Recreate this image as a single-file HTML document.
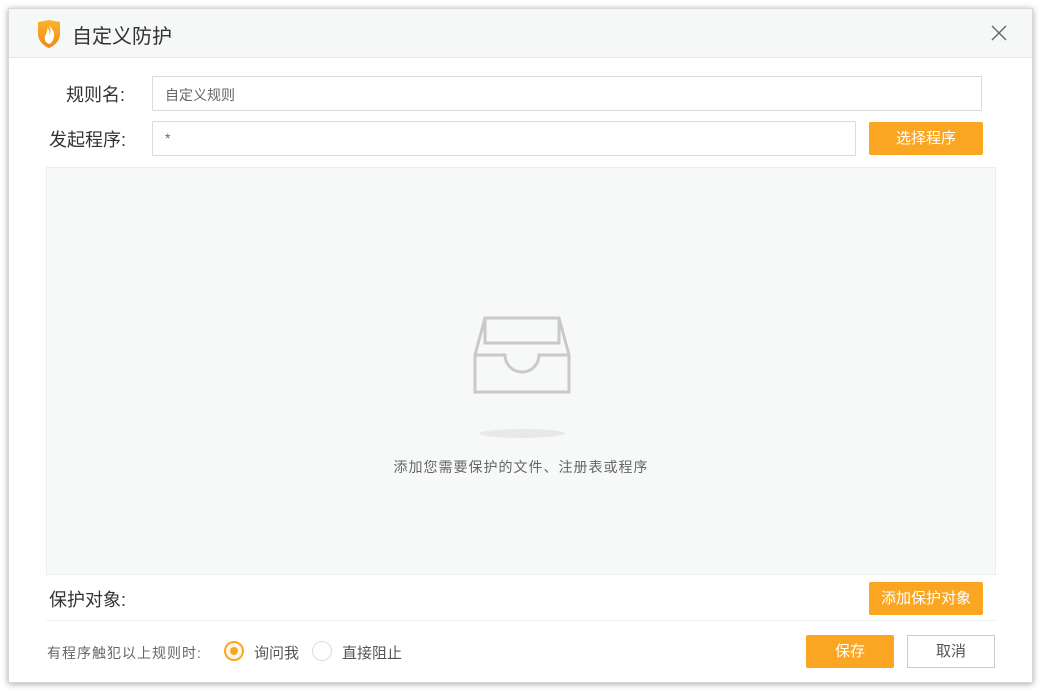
<!DOCTYPE html>
<html><head><meta charset="utf-8"><style>
*{margin:0;padding:0;box-sizing:border-box}
body{width:1042px;height:692px;background:#fff;font-family:"Liberation Sans","Noto Sans CJK SC",sans-serif;position:relative;overflow:hidden}
.win{position:absolute;left:8px;top:8px;width:1025px;height:675px;background:#fff;border:1px solid #d8d8d8;box-shadow:0 1px 6px rgba(0,0,0,.35)}
.title{position:absolute;left:0;top:0;width:100%;height:49px;background:#f6f7f7;border-bottom:1px solid #e6e6e6}
.title span{position:absolute;left:63px;top:11px;font-size:20px;color:#333}
.abs{position:absolute}
.lbl{font-size:18px;color:#333}
.inp{position:absolute;height:35px;border:1px solid #dcdcdc;background:#fff;font-size:14px;color:#666;padding:8px 12px}
.btn{position:absolute;background:#fba623;color:#fff;font-size:15px;text-align:center;border-radius:2px}
</style></head><body>
<div class="win">
 <div class="title">
  <svg class="abs" style="left:27px;top:10px" width="26" height="30" viewBox="0 0 26 30">
   <defs><linearGradient id="g" x1="0" y1="0" x2="0" y2="1"><stop offset="0" stop-color="#fbb42a"/><stop offset="1" stop-color="#f08a1a"/></linearGradient></defs>
   <path d="M2 3 L13 1 L24 3 L24 15 C24 22 18 27 13 29 C8 27 2 22 2 15 Z" fill="url(#g)"/>
   <path d="M13 6 C16 10 19 13 18 18 C17 23 14 25 13 25 C10 24 8 21 9 17 C10 14 12 12 11 9 C14 11 14 14 13 16 C15 15 15 11 13 6Z" fill="#fff"/>
  </svg>
  <span>自定义防护</span>
  <svg class="abs" style="left:982px;top:16px" width="16" height="16" viewBox="0 0 16 16"><path d="M1 1L15 15M15 1L1 15" stroke="#666" stroke-width="1.4"/></svg>
 </div>
 <div class="abs lbl" style="left:57px;top:72px">规则名:</div>
 <div class="inp" style="left:143px;top:67px;width:830px">自定义规则</div>
 <div class="abs lbl" style="left:40px;top:117px">发起程序:</div>
 <div class="inp" style="left:143px;top:112px;width:704px">*</div>
 <div class="btn" style="left:860px;top:113px;width:114px;height:33px;line-height:33px">选择程序</div>
 <div class="abs" style="left:37px;top:158px;width:950px;height:408px;background:#f7f8f8;border:1px solid #ededed">
  <svg class="abs" style="left:425px;top:148px" width="100" height="80" viewBox="0 0 100 80">
   <g fill="none" stroke="#c9c9c9" stroke-width="3">
    <path d="M13 2 L87 2 L97 39 L97 76 L3 76 L3 39 Z"/>
    <path d="M13 2 L13 27 L87 27 L87 2"/>
    <path d="M3 39 L33 39 A17 17 0 0 0 67 39 L97 39"/>
   </g>
  </svg>
  <div class="abs" style="left:432px;top:261px;width:86px;height:9px;border-radius:50%;background:#e8e8e8"></div>
  <div class="abs" style="left:0;top:289px;width:100%;text-align:center;font-size:14px;letter-spacing:1px;color:#666">添加您需要保护的文件、注册表或程序</div>
 </div>
 <div class="abs lbl" style="left:40px;top:577px">保护对象:</div>
 <div class="btn" style="left:860px;top:573px;width:114px;height:33px;line-height:33px">添加保护对象</div>
 <div class="abs" style="left:37px;top:611px;width:950px;border-top:1px solid #efefef"></div>
 <div class="abs" style="left:38px;top:634px;font-size:14px;letter-spacing:1px;color:#666">有程序触犯以上规则时:</div>
 <div class="abs" style="left:215px;top:632px;width:20px;height:20px;border-radius:50%;border:2px solid #fba623;background:#fff7e8"><div style="position:absolute;left:4px;top:4px;width:8px;height:8px;border-radius:50%;background:#fba623"></div></div>
 <div class="abs" style="left:245px;top:633px;font-size:15px;color:#555">询问我</div>
 <div class="abs" style="left:303px;top:632px;width:20px;height:20px;border-radius:50%;border:1px solid #ddd;background:#fff"></div>
 <div class="abs" style="left:333px;top:633px;font-size:15px;color:#555">直接阻止</div>
 <div class="btn" style="left:797px;top:626px;width:88px;height:33px;line-height:33px">保存</div>
 <div class="abs" style="left:898px;top:626px;width:88px;height:33px;line-height:31px;border:1px solid #ccc;text-align:center;font-size:15px;color:#555;background:#fff">取消</div>
</div>
</body></html>
